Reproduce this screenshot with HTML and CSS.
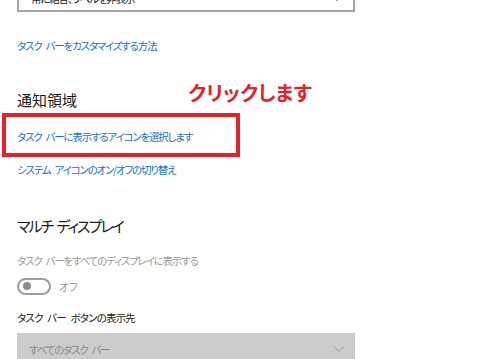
FILE: index.html
```html
<!DOCTYPE html>
<html lang="ja">
<head>
    <meta charset="UTF-8">
    <meta name="viewport" content="width=device-width, initial-scale=1.0">
    <title>タスク バー</title>
    <link rel="stylesheet" href="styles.css">
</head>
<body>
    <div class="settings">
        <div class="select select-top">
            <span>常に結合、ラベルを非表示</span>
            <svg class="chevron" width="12" height="8" viewBox="0 0 12 8"><polyline points="1,1.5 6,6.5 11,1.5" fill="none" stroke="#444" stroke-width="1"/></svg>
        </div>

        <a class="link link-first" href="#">タスク バーをカスタマイズする方法</a>

        <h2 class="section-title">通知領域</h2>
        <a class="link link-icons" href="#">タスク バーに表示するアイコンを選択します</a>
        <a class="link link-system" href="#">システム アイコンのオン/オフの切り替え</a>

        <h2 class="section-title section-multi">マルチ ディスプレイ</h2>
        <p class="option disabled">タスク バーをすべてのディスプレイに表示する</p>
        <div class="toggle-row">
            <span class="toggle"><span class="knob"></span></span>
            <span class="toggle-label">オフ</span>
        </div>
        <p class="option option-label">タスク バー ボタンの表示先</p>
        <div class="select select-disabled">
            <span>すべてのタスク バー</span>
            <svg class="chevron" width="12" height="8" viewBox="0 0 12 8"><polyline points="1,1.5 6,6.5 11,1.5" fill="none" stroke="#999" stroke-width="1"/></svg>
        </div>

        <!-- annotation over the screenshot -->
        <div class="highlight"></div>
        <div class="callout">クリックします</div>
    </div>
</body>
</html>
```

FILE: styles.css
```css
body {
    margin: 0;
    background: #fff;
    font-family: "Noto Sans CJK JP", "Noto Sans", sans-serif;
    font-feature-settings: "palt";
    color: #222;
    overflow: hidden;
}
.settings {
    position: relative;
    display: flow-root;
    padding: 0 17px;
    height: 359px;
    overflow: hidden;
}
.select {
    display: flex;
    align-items: center;
    justify-content: space-between;
    box-sizing: border-box;
    width: 338px;
    height: 32px;
    padding: 0 10px 0 12px;
    font-size: 10.5px;
    letter-spacing: -1.2px;
    word-spacing: 3px;
}
.select-top {
    margin-top: -20px;
    border: 2px solid #a6a6a6;
    padding-top: 4px;
}
.select-disabled {
    margin-top: 5px;
    background: #cccccc;
    color: #8a8a8a;
}
.chevron {
    display: block;
}
.link {
    display: block;
    height: 20px;
    line-height: 20px;
    font-size: 10.5px;
    letter-spacing: -1.2px;
    word-spacing: 3px;
    color: #1672d2;
    text-decoration: none;
}
.link-first {
    margin-top: 24px;
}
.link-icons {
    margin-top: 15px;
}
.link-system {
    margin-top: 13px;
}
.section-title {
    margin: 32px 0 0;
    height: 24px;
    line-height: 24px;
    font-size: 15px;
    font-weight: normal;
    color: #1a1a1a;
}
.section-multi {
    margin-top: 34px;
    letter-spacing: -2px;
    word-spacing: 3px;
}
.option {
    margin: 13px 0 0;
    height: 20px;
    line-height: 20px;
    font-size: 10.5px;
    letter-spacing: -1.2px;
    word-spacing: 3px;
}
.disabled {
    color: #9a9a9a;
}
.option-label {
    margin-top: 12px;
    color: #222;
    letter-spacing: -0.8px;
}
.toggle-row {
    display: flex;
    align-items: center;
    gap: 8px;
    margin-top: 5px;
    height: 20px;
}
.toggle {
    display: flex;
    align-items: center;
    box-sizing: border-box;
    width: 34px;
    height: 17px;
    border: 2px solid #9c9c9c;
    border-radius: 9px;
    padding-left: 4px;
}
.knob {
    width: 8px;
    height: 8px;
    border-radius: 50%;
    background: #8c8c8c;
}
.toggle-label {
    font-size: 10.5px;
    color: #9a9a9a;
}
.highlight {
    position: absolute;
    left: 2px;
    top: 113px;
    width: 238px;
    height: 44px;
    box-sizing: border-box;
    border: 4px solid #e8202a;
}
.callout {
    position: absolute;
    left: 188px;
    top: 79px;
    font-size: 20px;
    font-weight: bold;
    color: #e8202a;
    line-height: 28px;
}
```
